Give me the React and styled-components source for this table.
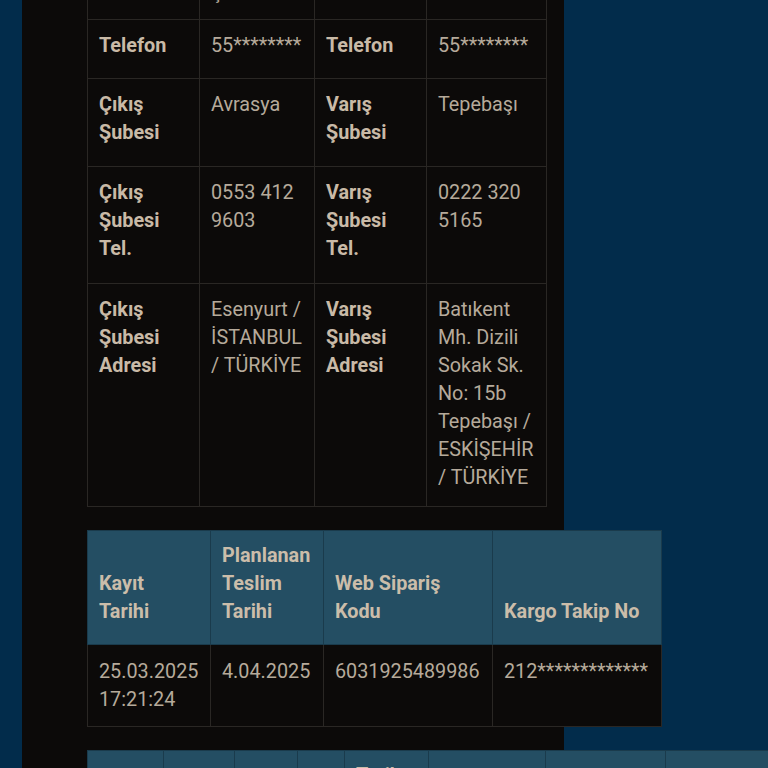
import React from 'react';
import styled, { createGlobalStyle } from 'styled-components';

const GlobalStyle = createGlobalStyle`
  html, body {
    margin: 0;
    padding: 0;
    overflow: hidden;
    background: #022c4b;
  }
  body {
    font-family: Roboto, "Noto Sans", "Liberation Sans", sans-serif;
  }
`;

const Page = styled.div`
  display: flex;
  padding-left: 22px;
  height: 768px;
`;

const Panel = styled.div`
  width: 542px;
  box-sizing: border-box;
  padding: 0 18px 0 65px;
  background: #0c0a09;
  min-height: 900px;
`;

const Table = styled.table`
  border-collapse: collapse;
  table-layout: fixed;
  width: ${(p) => p.$width}px;
  margin-top: ${(p) => p.$top || 0}px;
  margin-bottom: 23px;
  background: #0c0a09;
`;

const Row = styled.tr`
  height: ${(p) => (p.$height ? `${p.$height}px` : 'auto')};
`;

const Cell = styled.td`
  border: 1px solid #2a2724;
  padding: ${(p) => p.$pad || '12px 12px 12px 11px'};
  vertical-align: top;
  font-size: 19.8px;
  line-height: 28px;
  font-weight: ${(p) => (p.$label ? 700 : 400)};
  color: ${(p) => (p.$label ? '#c9baa7' : '#b6aa9b')};
`;

const Head = styled.th`
  background: #244e63;
  border: 1px solid #1a3b4c;
  padding: 11px 13px 18px 11px;
  vertical-align: bottom;
  text-align: left;
  font-size: 19.8px;
  line-height: 28px;
  font-weight: 700;
  color: #cbbdaa;
`;

const detailRows = [
  { h: 51, cells: ['İsim', 'Ş****', 'İsim', 'M****'] },
  { h: 59, cells: ['Telefon', '55********', 'Telefon', '55********'] },
  { h: 88, cells: ['Çıkış Şubesi', 'Avrasya', 'Varış Şubesi', 'Tepebaşı'] },
  { h: 117, cells: ['Çıkış Şubesi Tel.', '0553 412 9603', 'Varış Şubesi Tel.', '0222 320 5165'] },
  {
    h: 223,
    cells: [
      'Çıkış Şubesi Adresi',
      'Esenyurt / İSTANBUL / TÜRKİYE',
      'Varış Şubesi Adresi',
      'Batıkent Mh. Dizili Sokak Sk. No: 15b Tepebaşı / ESKİŞEHİR / TÜRKİYE',
    ],
  },
];

const detailCols = [112, 115, 112, 120];

const orderCols = [123, 113, 169, 169];
const orderHeads = ['Kayıt Tarihi', 'Planlanan Teslim Tarihi', 'Web Sipariş Kodu', 'Kargo Takip No'];
const orderValues = ['25.03.2025 17:21:24', '4.04.2025', '6031925489986', '212*************'];

const moveCols = [76, 71, 63, 47, 84, 117, 120, 120];
const moveHeads = ['İşlem', 'Şube', 'Birim', 'Tip', 'Tarih Saat Bilgisi', 'Açıklama', 'Teslim Alan Kişi', 'Durum'];

const App = () => {
  return (
    <Page>
      <GlobalStyle />
      <Panel>
        <Table $width={459} $top={-34}>
          <colgroup>
            {detailCols.map((w, i) => (
              <col key={i} style={{ width: w }} />
            ))}
          </colgroup>
          <tbody>
            {detailRows.map((row, i) => (
              <Row key={i} $height={row.h}>
                {row.cells.map((c, j) => (
                  <Cell key={j} $label={j % 2 === 0}>
                    {c}
                  </Cell>
                ))}
              </Row>
            ))}
          </tbody>
        </Table>

        <Table $width={574}>
          <colgroup>
            {orderCols.map((w, i) => (
              <col key={i} style={{ width: w }} />
            ))}
          </colgroup>
          <thead>
            <Row $height={113}>
              {orderHeads.map((h) => (
                <Head key={h}>{h}</Head>
              ))}
            </Row>
          </thead>
          <tbody>
            <Row $height={81}>
              {orderValues.map((v) => (
                <Cell key={v} $pad="13px 8px 12px 11px">
                  {v}
                </Cell>
              ))}
            </Row>
          </tbody>
        </Table>

        <Table $width={698}>
          <colgroup>
            {moveCols.map((w, i) => (
              <col key={i} style={{ width: w }} />
            ))}
          </colgroup>
          <thead>
            <Row>
              {moveHeads.map((h) => (
                <Head key={h}>{h}</Head>
              ))}
            </Row>
          </thead>
        </Table>
      </Panel>
    </Page>
  );
};

export default App;
